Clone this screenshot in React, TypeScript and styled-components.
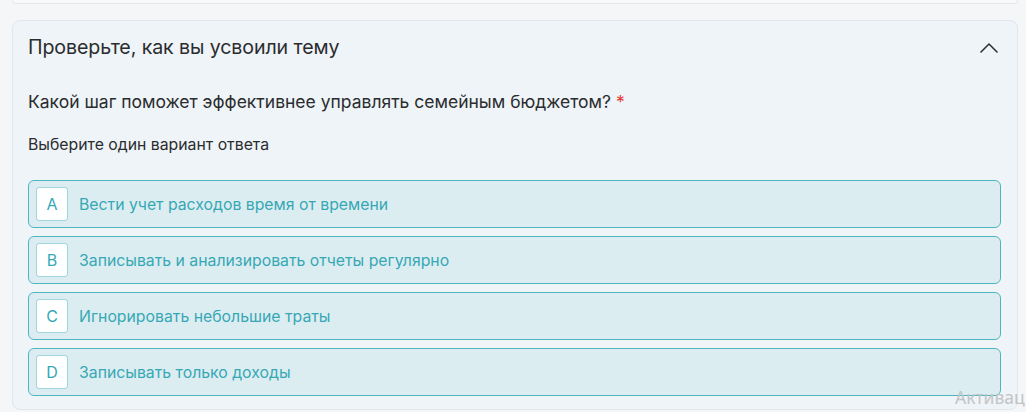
import React from "react";
import styled, { createGlobalStyle } from "styled-components";

const GlobalStyle = createGlobalStyle`
  html, body {
    margin: 0;
    padding: 0;
    background: #f5f6f8;
    overflow: hidden;
  }
  body {
    font-family: Inter, "Noto Sans", sans-serif;
    -webkit-font-smoothing: antialiased;
  }
`;

const Page = styled.div`
  width: 1026px;
  height: 412px;
  padding: 0 8px 0 12px;
  box-sizing: border-box;
  display: flex;
  flex-direction: column;
  gap: 16px;
  position: relative;
`;

const PrevCard = styled.div`
  height: 3px;
  background: #f8f9fa;
  border: 1px solid #e3e7ec;
  border-top: none;
  border-radius: 0 0 8px 8px;
`;

const Card = styled.section`
  background: #eff4f8;
  border: 1px solid #e1e7ee;
  border-radius: 8px;
  padding: 0 16px 13px 15px;
  display: flex;
  flex-direction: column;
`;

const Header = styled.div`
  height: 52px;
  display: flex;
  align-items: center;
  justify-content: space-between;
`;

const Title = styled.h2`
  margin: 0;
  font-size: 19.6px;
  font-weight: 400;
  color: #2a2c2e;
  letter-spacing: -0.1px;
`;

const Toggle = styled.button`
  border: none;
  background: none;
  padding: 0;
  margin-right: 3px;
  display: flex;
  cursor: pointer;
`;

const Question = styled.p`
  margin: 17px 0 0;
  font-size: 17.5px;
  line-height: 24px;
  color: #2a2c2e;
`;

const Required = styled.span`
  color: #e53935;
  margin-left: 5px;
`;

const Hint = styled.p`
  margin: 21px 0 0;
  font-size: 15.8px;
  line-height: 20px;
  color: #2a2c2e;
`;

const Options = styled.div`
  margin-top: 25px;
  display: flex;
  flex-direction: column;
  gap: 8px;
`;

const Option = styled.label`
  height: 48px;
  box-sizing: border-box;
  display: flex;
  align-items: center;
  gap: 11px;
  padding: 0 7px;
  background: #dcedf1;
  border: 1px solid #4db5c1;
  border-radius: 6px;
  cursor: pointer;
`;

const Letter = styled.span`
  width: 32px;
  height: 34px;
  box-sizing: border-box;
  display: flex;
  align-items: center;
  justify-content: center;
  background: #ffffff;
  border: 1px solid #9fd6dd;
  border-radius: 3px;
  font-size: 16px;
  color: #36a8b5;
`;

const OptionText = styled.span`
  font-size: 15.8px;
  color: #36a8b5;
`;

const Watermark = styled.div`
  position: absolute;
  left: 955px;
  top: 385px;
  white-space: nowrap;
  font-family: "Noto Sans", sans-serif;
  font-size: 17.5px;
  color: #c2c4c6;
  pointer-events: none;
`;

const options = [
  { key: "A", text: "Вести учет расходов время от времени" },
  { key: "B", text: "Записывать и анализировать отчеты регулярно" },
  { key: "C", text: "Игнорировать небольшие траты" },
  { key: "D", text: "Записывать только доходы" },
];

export default function App() {
  return (
    <>
      <GlobalStyle />
      <Page>
        <PrevCard />
        <Card>
          <Header>
            <Title>Проверьте, как вы усвоили тему</Title>
            <Toggle aria-label="Свернуть">
              <svg width="18" height="11" viewBox="0 0 18 11" fill="none">
                <polyline
                  points="1,10 9,2 17,10"
                  stroke="#2f3133"
                  strokeWidth="1.6"
                  strokeLinecap="round"
                  strokeLinejoin="round"
                />
              </svg>
            </Toggle>
          </Header>
          <Question>
            Какой шаг поможет эффективнее управлять семейным бюджетом?
            <Required>*</Required>
          </Question>
          <Hint>Выберите один вариант ответа</Hint>
          <Options>
            {options.map((o) => (
              <Option key={o.key}>
                <Letter>{o.key}</Letter>
                <OptionText>{o.text}</OptionText>
              </Option>
            ))}
          </Options>
        </Card>
        <Watermark>Активац</Watermark>
      </Page>
    </>
  );
}
